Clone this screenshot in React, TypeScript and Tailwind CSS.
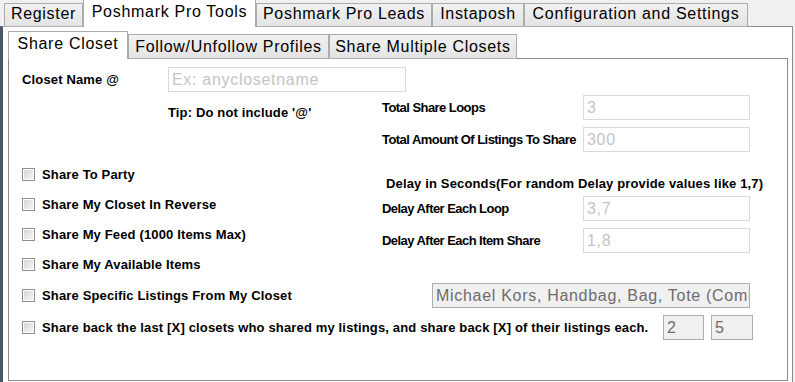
import React from "react";

function OuterTab({ label, active, w }: { label: string; active?: boolean; w: string }) {
  if (active) {
    return (
      <div className={`relative z-10 ${w} h-[27px] bg-white border-x border-[#acacac] flex justify-center pt-[3px] text-[16px] leading-[18px] tracking-[0.7px] text-black`}>
        {label}
      </div>
    );
  }
  return (
    <div className={`${w} h-[24px] bg-gradient-to-b from-[#f2f2f2] to-[#e3e3e3] border border-[#acacac] flex justify-center pt-[1px] text-[16px] leading-[18px] tracking-[0.7px] text-black`}>
      {label}
    </div>
  );
}

function InnerTab({ label, active, w }: { label: string; active?: boolean; w: string }) {
  if (active) {
    return (
      <div className={`relative z-10 ${w} h-[28px] bg-white border-x border-t border-[#acacac] flex justify-center pt-[3px] text-[16px] leading-[18px] tracking-[0.7px] text-black`}>
        {label}
      </div>
    );
  }
  return (
    <div className={`${w} h-[25px] bg-gradient-to-b from-[#f2f2f2] to-[#e3e3e3] border border-[#acacac] flex justify-center pt-[3px] text-[16px] leading-[18px] tracking-[0.7px] text-black`}>
      {label}
    </div>
  );
}

function Check() {
  return (
    <div className="w-[13px] h-[13px] shrink-0 border border-[#8f8f8f] bg-white p-px">
      <div className="w-full h-full bg-gradient-to-br from-[#d6d6d6] to-[#f6f6f6]" />
    </div>
  );
}

function Field({ value, w, muted }: { value: string; w: string; muted?: boolean }) {
  return (
    <div
      className={`${w} h-[25px] shrink-0 overflow-hidden whitespace-nowrap flex items-center pl-[3px] text-[16px] tracking-[0.7px] border ${
        muted
          ? "bg-[#f0f0f0] border-[#adadad] text-[#6d6d6d]"
          : "bg-white border-[#d9d9d9] text-[#c4c4c4]"
      }`}
    >
      {value}
    </div>
  );
}

const label = "text-[13px] font-bold tracking-[0.15px] text-black leading-[15px] whitespace-nowrap";
const tight = "text-[13px] font-bold tracking-[-0.55px] text-black leading-[15px] whitespace-nowrap";

function CheckRow({ text }: { text: string }) {
  return (
    <div className="h-[30px] flex items-center">
      <Check />
      <span className={`ml-[7px] ${label}`}>{text}</span>
    </div>
  );
}

function FieldRow({ text, value }: { text: string; value: string }) {
  return (
    <div className="flex items-center">
      <span className={`w-[201px] ${tight}`}>{text}</span>
      <Field value={value} w="w-[167px]" />
    </div>
  );
}

export default function App() {
  return (
    <div className="w-[795px] h-[382px] overflow-hidden bg-[#f0f0f0] font-['Liberation_Sans',Arial,sans-serif]">
      {/* Top tabs */}
      <div className="flex items-end h-[27px] pl-[4px]">
        <OuterTab label="Register" w="w-[79px]" />
        <OuterTab label="Poshmark Pro Tools" w="w-[173px]" active />
        <OuterTab label="Poshmark Pro Leads" w="w-[176px]" />
        <OuterTab label="Instaposh" w="w-[92px]" />
        <OuterTab label="Configuration and Settings" w="w-[224px]" />
      </div>

      {/* Outer page */}
      <div className="-mt-px w-[793px] h-[360px] bg-white border-t border-r border-[#8c8c8c] border-l-[3px] border-l-[#4b5669] pt-[4px] pl-[5px]">
        {/* Inner tabs */}
        <div className="flex items-end h-[28px]">
          <InnerTab label="Share Closet" w="w-[120px]" active />
          <InnerTab label="Follow/Unfollow Profiles" w="w-[201px]" />
          <InnerTab label="Share Multiple Closets" w="w-[188px]" />
        </div>

        {/* Inner page */}
        <div className="-mt-px w-[780px] h-[323px] border border-[#8c8c8c] bg-white pl-[13px] pt-[8px]">
          {/* Closet name */}
          <div className="flex items-center h-[25px]">
            <span className={`w-[146px] ${label}`}>Closet Name @</span>
            <Field value="Ex: anyclosetname" w="w-[238px]" />
          </div>

          <div className="flex">
            <div className="w-[360px] pl-[146px] pt-[8px]">
              <span className={label}>Tip: Do not include '@'</span>
            </div>
            <div className="pt-[3px] flex flex-col gap-[7px]">
              <FieldRow text="Total Share Loops" value="3" />
              <FieldRow text="Total Amount Of Listings To Share" value="300" />
            </div>
          </div>

          {/* Options + delays */}
          <div className="flex mt-[7px]">
            <div className="w-[360px]">
              <CheckRow text="Share To Party" />
              <CheckRow text="Share My Closet In Reverse" />
              <CheckRow text="Share My Feed (1000 Items Max)" />
              <CheckRow text="Share My Available Items" />
            </div>
            <div className="pt-[14px]">
              <div className={`h-[20px] flex items-center pl-[4px] ${label}`}>
                Delay in Seconds(For random Delay provide values like 1,7)
              </div>
              <div className="mt-[3px] flex flex-col gap-[7px]">
                <FieldRow text="Delay After Each Loop" value="3,7" />
                <FieldRow text="Delay After Each Item Share" value="1,8" />
              </div>
            </div>
          </div>

          {/* Specific listings */}
          <div className="mt-[4px] h-[25px] flex items-center">
            <Check />
            <span className={`ml-[7px] w-[390px] ${label}`}>Share Specific Listings From My Closet</span>
            <Field value="Michael Kors, Handbag, Bag, Tote (Comma separated)" w="w-[318px]" muted />
          </div>

          {/* Share back */}
          <div className="mt-[7px] h-[25px] flex items-center">
            <Check />
            <span className={`ml-[7px] w-[621px] ${label}`}>
              Share back the last [X] closets who shared my listings, and share back [X] of their listings each.
            </span>
            <div className="flex gap-[7px]">
              <Field value="2" w="w-[41px]" muted />
              <Field value="5" w="w-[42px]" muted />
            </div>
          </div>
        </div>
      </div>
    </div>
  );
}
